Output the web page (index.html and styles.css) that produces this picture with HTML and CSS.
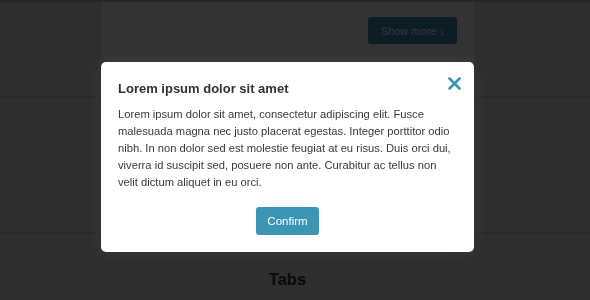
FILE: index.html
```html
<!DOCTYPE html>
<html lang="en">
<head>
  <meta charset="UTF-8" />
  <meta name="viewport" content="width=device-width, initial-scale=1.0"/>
  <title>Modal demo</title>
  <link rel="stylesheet" href="styles.css">
</head>
<body>
  <div class="page">
    <section class="demo demo-top">
      <div class="card">
        <button class="btn btn-more">Show more &darr;</button>
      </div>
    </section>
    <section class="demo demo-mid"></section>
    <section class="demo demo-tabs">
      <h2>Tabs</h2>
    </section>
  </div>

  <div class="overlay">
    <div class="modal">
      <div class="modal-head">
        <h3>Lorem ipsum dolor sit amet</h3>
        <button class="close" aria-label="Close">
          <svg width="13" height="13" viewBox="0 0 13 13"><path d="M1.5 1.5 L11.5 11.5 M11.5 1.5 L1.5 11.5" stroke="#3a93b4" stroke-width="2.6" stroke-linecap="round"/></svg>
        </button>
      </div>
      <p>Lorem ipsum dolor sit amet, consectetur adipiscing elit. Fusce malesuada magna nec justo placerat egestas. Integer porttitor odio nibh. In non dolor sed est molestie feugiat at eu risus. Duis orci dui, viverra id suscipit sed, posuere non ante. Curabitur ac tellus non velit dictum aliquet in eu orci.</p>
      <div class="modal-foot">
        <button class="btn">Confirm</button>
      </div>
    </div>
  </div>
</body>
</html>
```

FILE: styles.css
```css
body {
  margin: 0;
  font-family: 'Liberation Sans', Arial, sans-serif;
  background: #e6e6e6;
  color: #333;
  border-top: 2px solid #c2c2c2;
  overflow: hidden;
}
.demo {
  border-bottom: 1px solid #cacaca;
  padding-right: 15px;
}
.demo-top {
  height: 94px;
}
.card {
  width: 339px;
  margin-left: 101px;
  height: 79px;
  padding: 15px 17px 0;
  background: #fff;
  text-align: right;
}
.btn {
  background: #3d95b5;
  color: #fff;
  border: none;
  border-radius: 3px;
  font-family: inherit;
  font-size: 11.5px;
  padding: 0 11px;
  height: 28px;
  cursor: pointer;
}
.btn-more {
  height: 27px;
  font-size: 11px;
  padding: 0 12px 0 13px;
}
.demo-mid {
  height: 135px;
}
.demo-tabs {
  border-bottom: none;
  text-align: center;
  padding-top: 37px;
}
.demo-tabs h2 {
  margin: 0;
  font-size: 16.5px;
  color: #333;
}
.overlay {
  position: fixed;
  inset: 0;
  background: rgba(0, 0, 0, 0.8);
}
.modal {
  position: absolute;
  left: 101px;
  top: 62px;
  width: 339px;
  padding: 17px 17px 17px;
  background: #fff;
  border-radius: 5px;
  box-shadow: 0 0 14px rgba(255, 255, 255, 0.05);
}
.modal-head {
  display: flex;
  justify-content: space-between;
  align-items: flex-start;
}
.modal-head h3 {
  margin: 2px 0 0;
  font-size: 13px;
  color: #333;
}
.close {
  background: none;
  border: none;
  padding: 0;
  margin: -2px -4px 0 0;
  width: 13px;
  height: 13px;
  display: flex;
  cursor: pointer;
}
.modal p {
  margin: 10px 0 0;
  font-size: 11.2px;
  line-height: 17px;
  color: #3a3a3a;
}
.modal-foot {
  text-align: center;
  margin-top: 16px;
}
```
